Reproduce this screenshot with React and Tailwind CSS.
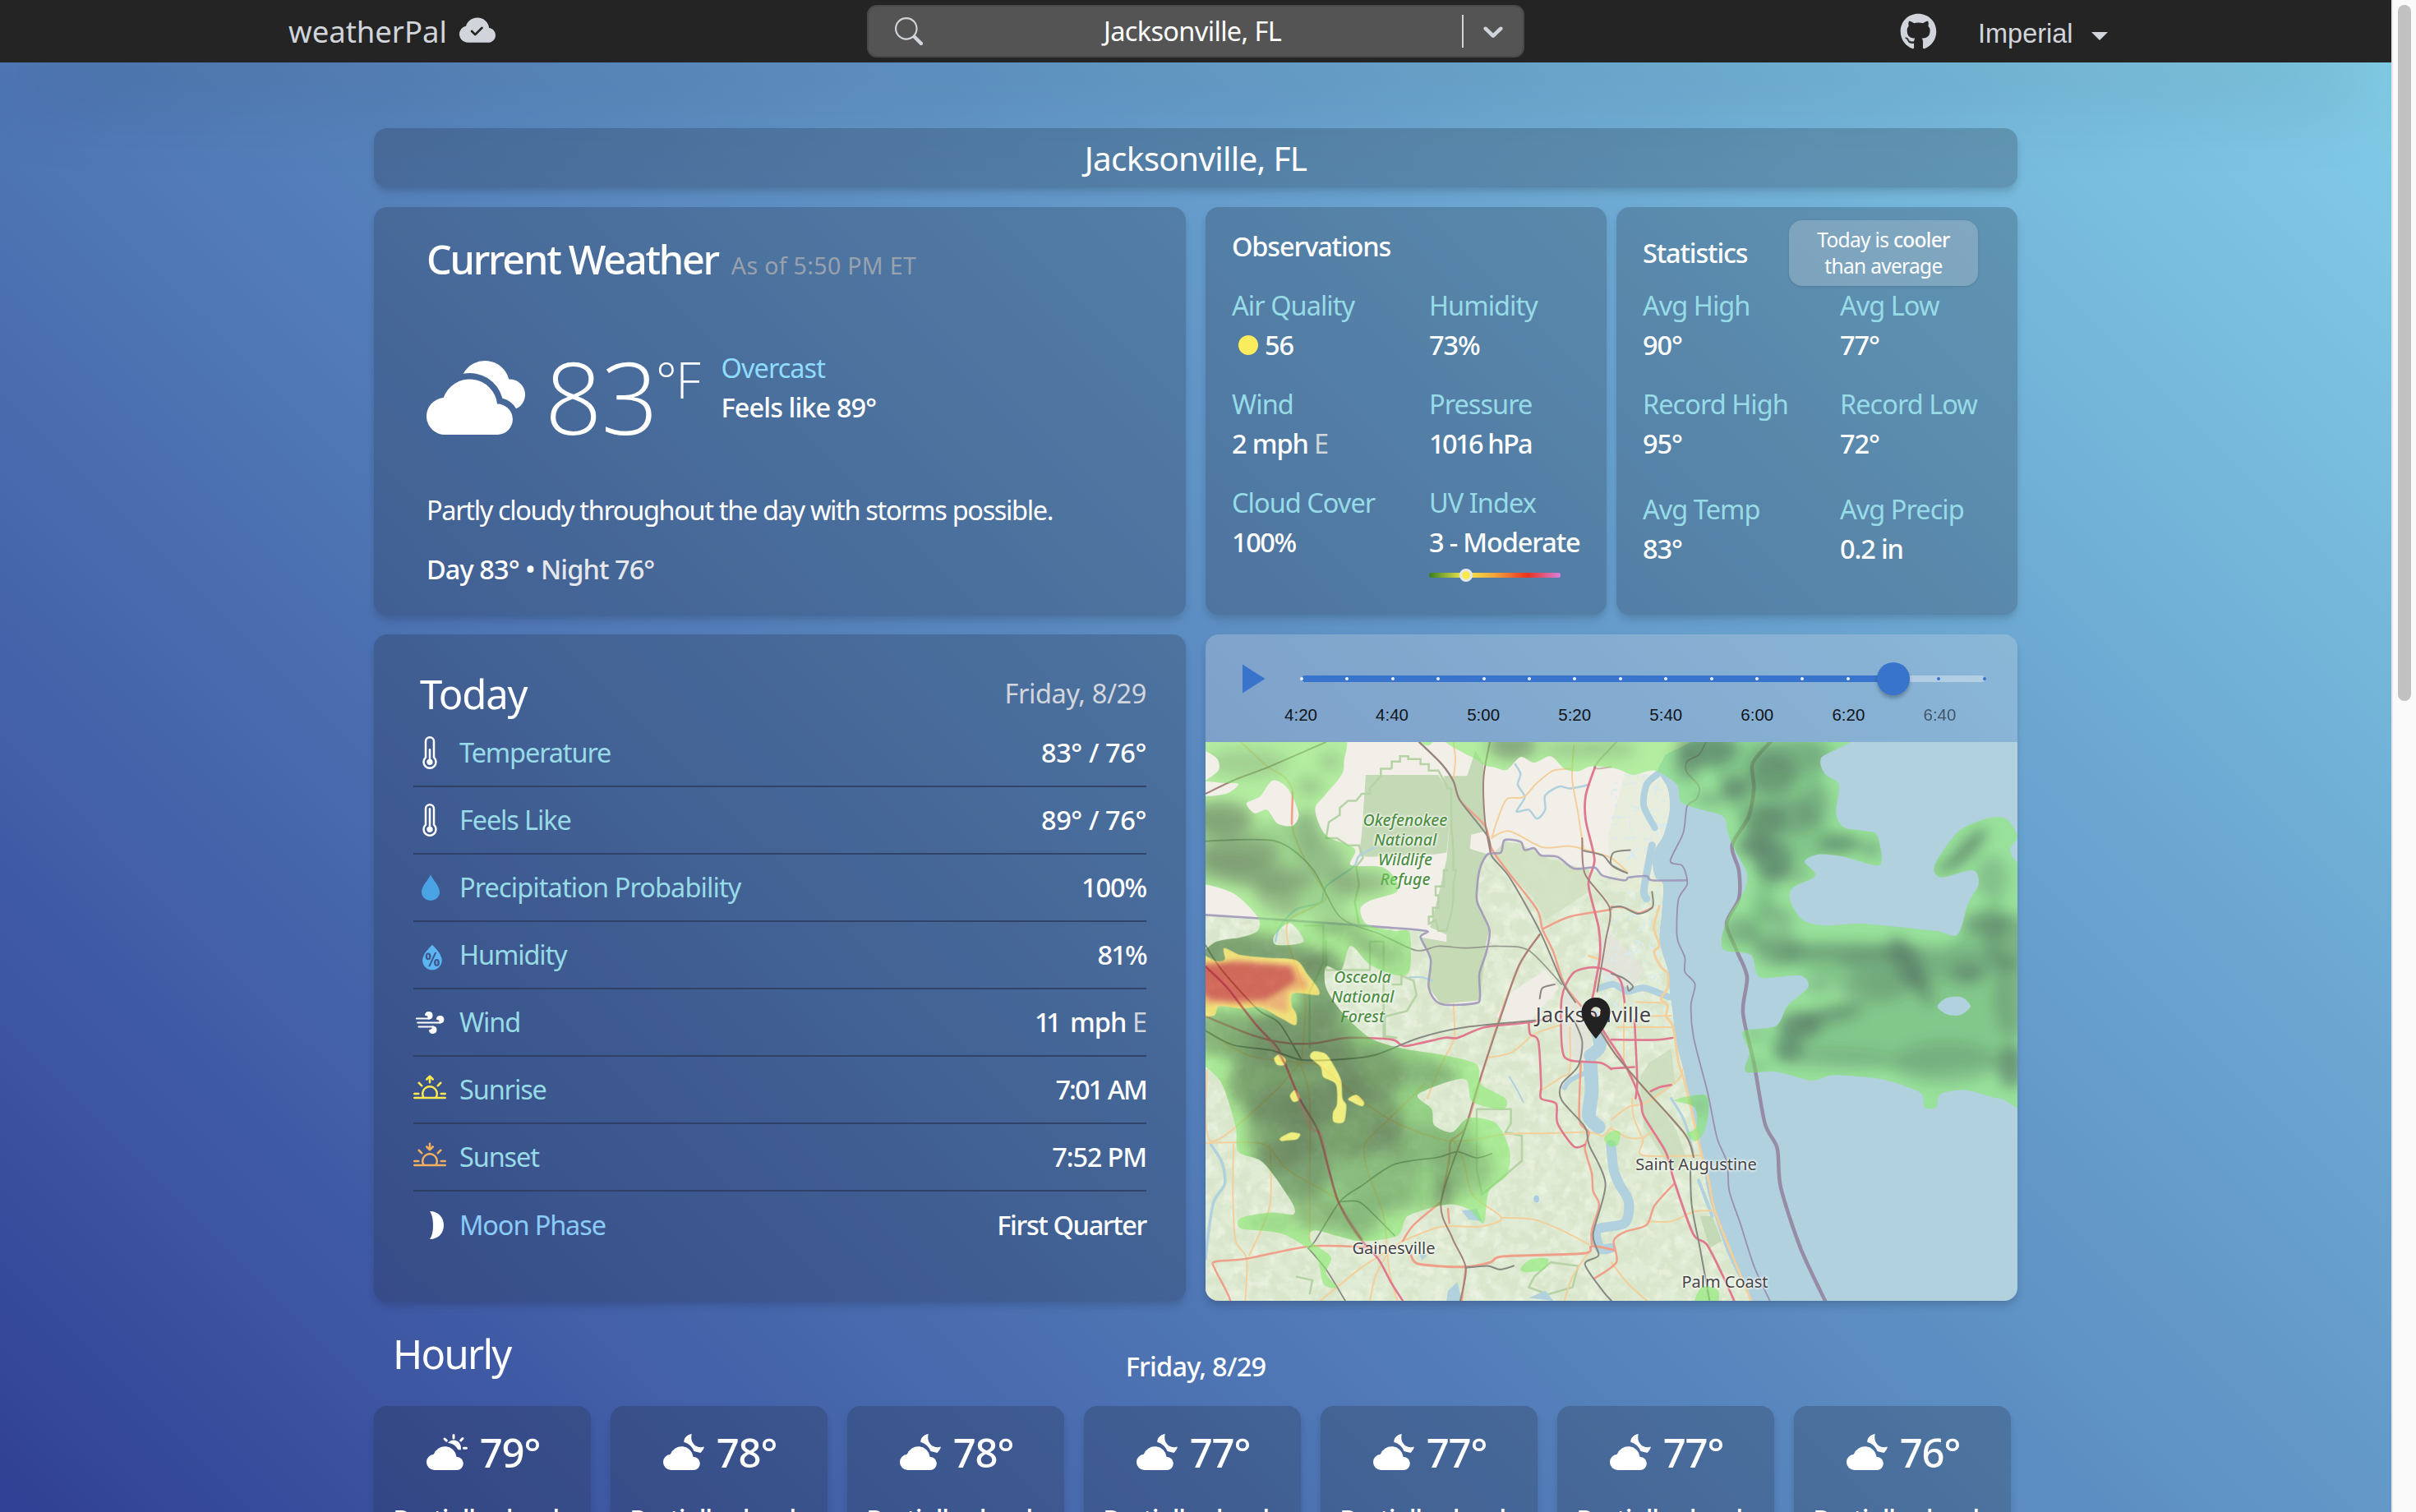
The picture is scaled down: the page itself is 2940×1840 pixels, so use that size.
import React from "react";
import {
  BsCloudCheckFill,
  BsSearch,
  BsCloudsFill,
  BsThermometerHalf,
  BsThermometerHigh,
  BsSunrise,
  BsSunset,
} from "react-icons/bs";
import { WiHumidity } from "react-icons/wi";
import { FaGithub } from "react-icons/fa";
import { MdArrowDropDown, MdPlayArrow, MdLocationOn } from "react-icons/md";

/* Catmull-Rom spline through a flat list of coordinates. */
function curve(flat, closed) {
  const p = [];
  for (let i = 0; i < flat.length; i += 2) p.push([flat[i], flat[i + 1]]);
  const n = p.length;
  const at = (i) => (closed ? p[(i + n) % n] : p[Math.max(0, Math.min(n - 1, i))]);
  let d = `M${p[0][0]},${p[0][1]}`;
  const last = closed ? n : n - 1;
  for (let i = 0; i < last; i++) {
    const [a, b, c, e] = [at(i - 1), at(i), at(i + 1), at(i + 2)];
    const k = 7;
    d += `C${b[0] + (c[0] - a[0]) / k},${b[1] + (c[1] - a[1]) / k} ${c[0] - (e[0] - b[0]) / k},${c[1] - (e[1] - b[1]) / k} ${c[0]},${c[1]}`;
  }
  return closed ? d + "Z" : d;
}

function Line({ pts, c, w = 2, o = 1, dash }) {
  return (
    <path d={curve(pts, false)} fill="none" stroke={c} strokeWidth={w} strokeOpacity={o} strokeDasharray={dash}
      strokeLinejoin="round" strokeLinecap="round" vectorEffect="non-scaling-stroke" />
  );
}

const LAND = curve([-40, -40, 1690, -40, 1675, 40, 1652, 80, 1687, 130, 1694, 190, 1672, 260, 1642, 300, 1632, 340, 1642, 380, 1670, 400, 1665, 480, 1657, 560, 1687, 640, 1694, 700, 1705, 760, 1717, 840, 1747, 930, 1767, 1020, 1792, 1100, 1817, 1190, 1832, 1260, 1862, 1340, 1902, 1430, 1952, 1510, 1992, 1568, 2000, 1620, -40, 1620], true);
const BORDER = [0, 485, 300, 500, 620, 518, 805, 530, 785, 548, 822, 610, 815, 690, 860, 735, 985, 733, 1002, 715, 1000, 650, 1025, 590, 1037, 530, 1010, 480, 990, 440, 1000, 360, 1030, 315, 1078, 310, 1092, 275, 1150, 280, 1165, 303, 1200, 298, 1225, 318, 1285, 322, 1345, 355, 1420, 352, 1450, 375, 1530, 388, 1545, 380, 1610, 376, 1630, 388, 1757, 388];
const FLORIDA = curve([...BORDER.slice(0, -2), 1680, 400, 2050, 1620, -40, 1620, -40, 485], true);

const GREEN = "#b6d3a6";
const ORANGE = "#f3cf9c";
const RED = "#f0a08a";
const PINK = "#e0788f";
const RAIL = "#8a8882";
const BROWN = "#a2837a";
const WATER = "#b0d1dd";

function BaseMap() {
  return (
    <svg className="absolute inset-0 h-full w-full" viewBox="0 0 2964 1568" preserveAspectRatio="none">
      <defs>
        <clipPath id="land"><path d={LAND} /></clipPath>
        <clipPath id="florida"><path d={FLORIDA} /></clipPath>
        <filter id="woods" x="0" y="0" width="100%" height="100%">
          <feTurbulence type="fractalNoise" baseFrequency="0.018 0.024" numOctaves="5" seed="7" />
          <feColorMatrix values="0 0 0 0 0.77  0 0 0 0 0.86  0 0 0 0 0.70  4 0 0 0 -1.6" />
        </filter>
        <filter id="fields" x="0" y="0" width="100%" height="100%">
          <feTurbulence type="fractalNoise" baseFrequency="0.024 0.03" numOctaves="5" seed="21" />
          <feColorMatrix values="0 0 0 0 0.92  0 0 0 0 0.94  0 0 0 0 0.84  0 4 0 0 -2.1" />
        </filter>
        <filter id="marsh" x="0" y="0" width="100%" height="100%">
          <feTurbulence type="turbulence" baseFrequency="0.02 0.026" numOctaves="2" seed="4" />
          <feColorMatrix values="0 0 0 0 0.68  0 0 0 0 0.83  0 0 0 0 0.87  -16 0 0 0 1.6" />
        </filter>
      </defs>
      <rect width="2964" height="1568" fill={WATER} />
      <path d={LAND} fill="#f2efe9" />
      <g clipPath="url(#land)">
        <path d={FLORIDA} fill="#d9e6cb" />
        <g clipPath="url(#florida)">
          <rect width="2100" height="1568" filter="url(#woods)" opacity=".75" />
          <rect width="2100" height="1568" filter="url(#fields)" opacity=".5" />
        </g>
        <path d="M585 92H850L890 140 895 200 880 310 840 315 600 322 560 320 570 260Z" fill="#c4d9b5" />
        <path d="M870 95H955L985 25 1015 60 1020 250 970 260 965 300 1030 315 1000 350 990 440 1035 530 1020 580 880 575 880 540 820 520 850 430 880 330 895 200Z" fill="#c4d9b5" />
        <path d="M785 548 822 610 815 690 860 735 1000 725 1025 580Z" fill="#c6dab6" />
        <path d="M1090 280 1150 285 1220 320 1400 360 1400 420 1240 500 1200 440 1040 320Z" fill="#cfe0bf" opacity=".8" />
        <path d="M1060 770 1120 700 1240 640 1290 690 1200 770 1160 800Z" fill="#f0ece6" />
        <path d="M1440 560 1480 540 1560 600 1600 640 1560 690 1440 650ZM1300 700 1360 700 1420 880 1360 900 1310 860Z" fill="#e4e2dc" opacity=".8" />
        <path d="M1530 90H1700V420H1480L1470 260Z" fill="#e6edd4" opacity=".7" />
        <g>
          <clipPath id="tidal"><path d="M1480 90H1700V760H1440L1400 640 1500 480 1480 300Z" /></clipPath>
          <g clipPath="url(#tidal)"><rect x="1380" width="340" height="800" filter="url(#marsh)" /></g>
        </g>
        <path d="M1585 940 1620 900 1700 860 1715 960 1640 1000 1720 1090 1760 1180 1700 1200 1600 1080Z" fill="#c7dbb8" opacity=".75" />
        <path d="M1805 1330 1850 1330 1885 1400 1840 1420Z" fill="#c4d9b5" />
      </g>
      <g fill="none" stroke={GREEN} strokeWidth="2.5" strokeLinejoin="miter">
        <path vectorEffect="non-scaling-stroke" d="M680 75V55H710V40H740V48H785V62H815V80H850L885 130H897V240L905 300V360H915L905 400V440L900 470 880 530H850L840 500 815 510V490H830V465H850V430H840V405H870V360H885" />
        <path vectorEffect="non-scaling-stroke" d="M680 75H640V95L600 130V145H570L550 165H520L490 185V205L450 225 440 270H480L520 290H560L575 325 550 350 560 400 545 450 560 510" />
        <path vectorEffect="non-scaling-stroke" d="M360 515H430V560H440V640H600V560H650V830H700L655 825V770L735 755 770 710 760 670 715 655V680H680" />
        <path vectorEffect="non-scaling-stroke" d="M990 1030H1115V1070L1095 1095 1155 1105V1175L1010 1270 990 1200ZM430 540V620L380 700V860" />
        <path vectorEffect="non-scaling-stroke" d="M1200 1500 1260 1460 1360 1470 1340 1530 1250 1550 1180 1530ZM330 1500 390 1510 380 1550" />
      </g>
      <g>
        <Line pts={[1130, 62, 1150, 90, 1140, 120, 1165, 155, 1135, 195, 1180, 190, 1210, 215, 1240, 190, 1240, 150, 1290, 125, 1330, 130, 1400, 120]} c={WATER} w={2.5} />
        <Line pts={[620, 295, 560, 320, 540, 350, 440, 405, 420, 450, 330, 470, 270, 520, 255, 560]} c={WATER} w={2.5} />
        <Line pts={[20, 1130, 60, 1180, 70, 1240, 30, 1290, 10, 1380, 0, 1450]} c={WATER} w={3.5} />
        <Line pts={[745, 660, 790, 660, 830, 670]} c={WATER} w={2} />
        <Line pts={[1110, 940, 1140, 980, 1160, 1010]} c={WATER} w={2} />
        <Line pts={[1415, 770, 1440, 850, 1405, 880]} c={WATER} w={16} />
        <Line pts={[1405, 905, 1410, 980, 1400, 1050, 1435, 1080]} c={WATER} w={17} />
        <Line pts={[1310, 970, 1330, 950, 1380, 930]} c={WATER} w={6} />
        <Line pts={[1480, 1130, 1490, 1200, 1510, 1240, 1545, 1290, 1530, 1350, 1430, 1368, 1440, 1420, 1480, 1420]} c={WATER} w={12} />
        <Line pts={[1440, 690, 1490, 680, 1540, 700, 1600, 690, 1690, 715]} c={WATER} w={8} />
        <Line pts={[1630, 290, 1615, 350, 1600, 420, 1610, 440]} c={WATER} w={9} />
        <Line pts={[1650, 90, 1610, 120, 1600, 180, 1640, 240]} c={WATER} w={8} />
        <Line pts={[1700, 1000, 1740, 1050, 1760, 1090, 1780, 1150]} c={WATER} w={3} />
        <Line pts={[1800, 1230, 1830, 1290, 1850, 1330]} c={WATER} w={4} />
        <path d="M935 1315 990 1310 1010 1345 960 1340ZM885 1540 920 1515 935 1568H880ZM1180 1560 1240 1540 1270 1568ZM780 1435 810 1440 790 1455Z" fill={WATER} />
        <circle cx="1208" cy="1282" r="10" fill="#a9cde4" />
      </g>
      <g>
        <Line pts={[130, 0, 220, 65, 290, 100, 318, 140, 315, 230, 350, 310, 438, 430, 400, 460, 305, 500, 300, 560, 345, 660, 365, 740, 350, 900]} c={ORANGE} />
        <Line pts={[905, 0, 912, 50, 905, 100]} c={ORANGE} />
        <Line pts={[1045, 270, 1065, 220, 1100, 160, 1160, 155, 1210, 115, 1270, 80, 1335, 75]} c={ORANGE} />
        <Line pts={[1045, 268, 1110, 250, 1230, 295, 1330, 292, 1400, 305, 1480, 325, 1540, 365]} c={ORANGE} />
        <Line pts={[1345, 10, 1338, 100, 1360, 200, 1380, 300]} c={ORANGE} />
        <Line pts={[905, 735, 908, 830, 870, 890, 835, 950, 810, 1000]} c={ORANGE} />
        <Line pts={[1035, 885, 1120, 870, 1200, 820, 1290, 795]} c={ORANGE} />
        <Line pts={[0, 810, 160, 880, 350, 900, 420, 910, 560, 1000, 700, 1070, 900, 1120, 1100, 1100, 1230, 1098, 1400, 1095, 1450, 1105, 1482, 1080]} c={ORANGE} />
        <Line pts={[5, 920, 20, 1120, 240, 990, 345, 900]} c={ORANGE} />
        <Line pts={[0, 1125, 210, 1128, 300, 1200, 480, 1280]} c={ORANGE} />
        <Line pts={[345, 900, 380, 1000, 380, 1250, 380, 1400]} c={ORANGE} />
        <Line pts={[102, 1128, 100, 1280, 110, 1400, 150, 1450, 145, 1568]} c={ORANGE} />
        <Line pts={[235, 1128, 235, 1300, 160, 1440]} c={ORANGE} />
        <Line pts={[800, 960, 640, 1080, 580, 1130, 590, 1200, 650, 1330, 670, 1480, 700, 1568]} c={ORANGE} />
        <Line pts={[900, 1110, 940, 1170, 975, 1270, 1080, 1335, 1000, 1360, 860, 1360, 720, 1400]} c={ORANGE} />
        <Line pts={[1080, 1335, 1200, 1340, 1300, 1370, 1400, 1410]} c={ORANGE} />
        <Line pts={[420, 1568, 560, 1480, 640, 1440, 720, 1400]} c={ORANGE} />
        <Line pts={[600, 1568, 620, 1500, 660, 1440]} c={ORANGE} />
        <Line pts={[1220, 980, 1300, 940, 1330, 920, 1330, 800]} c={ORANGE} />
        <Line pts={[1310, 1568, 1340, 1500, 1400, 1430]} c={ORANGE} />
        <Line pts={[1400, 600, 1440, 610]} c={ORANGE} w={3} />
        <g transform="translate(1482 0)">
          <Line pts={[175, 460, 155, 520, 175, 570, 155, 590, 180, 630, 205, 650, 205, 690, 180, 720, 205, 740, 200, 770, 225, 800, 245, 900, 270, 960, 300, 1060, 330, 1160, 355, 1230, 375, 1310, 430, 1420, 510, 1568]} c={ORANGE} w={3} />
          <Line pts={[90, 730, 200, 732]} c={ORANGE} />
          <Line pts={[20, 800, 225, 800]} c={ORANGE} />
          <Line pts={[100, 770, 218, 768]} c={ORANGE} />
          <Line pts={[45, 730, 45, 900]} c={ORANGE} />
          <Line pts={[0, 1060, 60, 1025, 130, 1010, 240, 950, 260, 920]} c={ORANGE} />
          <Line pts={[75, 1000, 80, 1050, 100, 1090, 115, 1120, 115, 1160, 330, 1160]} c={ORANGE} />
          <Line pts={[0, 1085, 60, 1110, 115, 1110, 150, 1090]} c={ORANGE} />
          <Line pts={[130, 1345, 220, 1345, 300, 1318, 370, 1315]} c={ORANGE} />
          <Line pts={[0, 1460, 60, 1520, 130, 1568]} c={ORANGE} />
        </g>
      </g>
      <g>
        <Line pts={[780, 0, 860, 60, 905, 110, 930, 165, 1020, 235, 1045, 300, 1110, 370, 1210, 470, 1230, 525, 1270, 590, 1310, 680, 1370, 740]} c={RED} w={2.5} />
        <Line pts={[1230, 525, 1330, 490, 1482, 470]} c={RED} w={2.5} />
        <Line pts={[1482, 462, 1530, 465, 1580, 480, 1630, 465]} c={RED} w={2.5} />
        <Line pts={[0, 145, 110, 105, 230, 70, 440, 0]} c={BROWN} w={2} />
        <Line pts={[318, 140, 315, 230]} c={RED} w={2.5} />
        <Line pts={[1220, 540, 1150, 620, 1080, 760, 1010, 930, 950, 1080, 895, 1120, 890, 1170, 860, 1290]} c={RED} w={2.5} />
        <Line pts={[1370, 900, 1365, 1060, 1400, 1095, 1385, 1140, 1410, 1210, 1415, 1260, 1437, 1300, 1410, 1370, 1410, 1410]} c={RED} w={2.5} />
        <Line pts={[30, 1568, 90, 1568, 35, 1480, 35, 1458, 150, 1450, 380, 1415, 600, 1418, 640, 1420]} c={RED} w={2.5} />
        <Line pts={[860, 1290, 760, 1355, 720, 1400]} c={RED} w={2.5} />
        <Line pts={[885, 1310, 890, 1350]} c={RED} w={2.5} />
        <Line pts={[750, 1440, 780, 1465, 950, 1473, 1040, 1460, 1090, 1443, 1380, 1435, 1410, 1415, 1490, 1425]} c={RED} w={3} />
        <Line pts={[1710, 1240, 1640, 1300, 1610, 1355, 1530, 1375, 1490, 1400, 1500, 1460, 1420, 1505]} c={RED} w={2.5} />
        <Line pts={[950, 1475, 935, 1568]} c={RED} w={2.5} />
      </g>
      <g>
        <Line pts={[0, 630, 80, 690, 180, 790, 265, 860, 310, 940, 350, 1010, 410, 1090, 450, 1200, 490, 1300, 560, 1390, 630, 1450, 680, 1520, 720, 1568]} c={PINK} w={2.6} />
        <Line pts={[0, 770, 180, 825, 300, 845, 400, 845, 520, 830, 680, 835, 730, 853, 870, 830, 920, 830, 1020, 800, 1180, 787, 1250, 775]} c={PINK} w={2.6} />
        <Line pts={[1180, 787, 1185, 820, 1215, 840, 1225, 960, 1225, 1000, 1280, 1015, 1285, 1070, 1345, 1135, 1385, 1130]} c={PINK} w={2.6} />
        <Line pts={[1482, 918, 1440, 900, 1330, 893, 1302, 860, 1300, 720, 1340, 650, 1400, 633, 1450, 636, 1500, 655, 1520, 680, 1530, 730]} c={PINK} w={2.6} />
        <Line pts={[1422, 70, 1388, 150, 1388, 220, 1420, 330, 1398, 400, 1435, 520, 1440, 600, 1420, 690, 1410, 750, 1460, 820, 1520, 890, 1560, 950, 1590, 1010, 1600, 1050, 1680, 1150, 1710, 1230, 1780, 1380, 1830, 1410, 1890, 1500, 1930, 1568]} c={PINK} w={2.8} />
        <Line pts={[1566, 780, 1576, 950, 1570, 1000]} c={PINK} w={2.6} />
        <Line pts={[1482, 835, 1640, 836, 1705, 830]} c={PINK} w={2.6} />
        <Line pts={[1482, 916, 1565, 912]} c={PINK} w={2.6} />
        <Line pts={[1625, 980, 1660, 968, 1700, 962]} c={PINK} w={2.6} />
      </g>
      <g>
        <Line pts={[0, 278, 255, 278, 390, 355, 490, 490, 640, 540, 770, 585, 850, 573, 950, 578, 1070, 573, 1180, 585, 1300, 680]} c={RAIL} o={0.8} w={1.7} />
        <Line pts={[780, 0, 860, 60, 905, 110, 930, 165, 1030, 265, 1045, 320, 1110, 380, 1220, 530, 1300, 670, 1350, 730]} c={RAIL} w={2} />
        <Line pts={[1038, 0, 1015, 100, 1020, 220, 1040, 310]} c={BROWN} w={2} />
        <Line pts={[1220, 540, 1145, 625, 1085, 755, 1000, 950, 950, 1080, 860, 1290, 900, 1390, 950, 1475, 930, 1568]} c={BROWN} w={2} />
        <Line pts={[0, 810, 100, 850, 240, 865, 350, 892, 500, 890, 620, 878, 780, 830, 950, 800, 1220, 780]} c={RAIL} w={2} />
        <Line pts={[0, 570, 60, 640, 190, 750, 270, 790, 350, 892]} c={RAIL} w={2} />
        <Line pts={[1045, 1155, 990, 1167, 920, 1150, 850, 1165, 690, 1185, 570, 1245, 490, 1290, 400, 1400, 375, 1420]} c={RAIL} w={1.7} />
        <Line pts={[375, 1420, 440, 1480, 510, 1568]} c={RAIL} w={1.7} />
        <Line pts={[490, 1290, 560, 1290, 620, 1330, 690, 1385]} c={RAIL} w={1.7} />
        <Line pts={[950, 1475, 1030, 1470, 1075, 1480, 1125, 1470]} c={RAIL} w={2.2} />
        <Line pts={[1275, 680, 1230, 690, 1220, 720]} c={RAIL} w={2} />
        <Line pts={[1345, 780, 1375, 840, 1360, 910, 1300, 960, 1300, 1005, 1385, 1080, 1400, 1130, 1460, 1240, 1415, 1380, 1435, 1440, 1385, 1465, 1450, 1540, 1482, 1568]} c={RAIL} w={2} />
        <Line pts={[1375, 270, 1385, 370, 1475, 465, 1460, 560, 1430, 700]} c={BROWN} w={2} />
        <Line pts={[1480, 70, 1420, 70, 1500, 0]} c={BROWN} w={2} o={0.5} />
        <Line pts={[1440, 810, 1500, 880, 1600, 970, 1750, 1100, 1782, 1165]} c="#9a8270" w={2.2} />
        <Line pts={[1770, 1200, 1775, 1300, 1805, 1420, 1840, 1568]} c={RAIL} w={2} />
        <Line pts={[1380, 305, 1450, 318, 1482, 345, 1540, 368, 1482, 345, 1490, 310, 1550, 303]} c={RAIL} w={2} />
        <Line pts={[1482, 465, 1520, 462, 1580, 482, 1632, 463, 1630, 420]} c={RAIL} w={2} />
        <Line pts={[1482, 650, 1525, 662, 1560, 685, 1545, 698, 1540, 685]} c={RAIL} w={2} />
      </g>
      <Line pts={BORDER} c="#9c93b8" w={2.6} o={0.85} />
      <g transform="translate(1482 0)">
        <Line pts={[345, 0, 320, 35, 275, 55, 275, 85, 320, 125, 310, 160, 276, 180, 262, 255, 215, 333, 255, 345, 270, 365, 276, 400, 245, 440, 238, 520, 243, 560, 268, 605, 268, 645, 305, 680, 290, 740, 300, 830, 350, 980, 385, 1110, 422, 1180, 430, 1260, 470, 1350, 520, 1470, 578, 1568]} c="#9b8fae" w={1.8} />
        <Line pts={[580, 0, 515, 60, 520, 130, 500, 210, 440, 290, 465, 360, 465, 440, 420, 510, 460, 590, 495, 660, 480, 760, 520, 900, 560, 1070, 605, 1140, 618, 1250, 690, 1420, 780, 1568]} c="#968ca6" w={4.5} />
      </g>
    </svg>
  );
}

const RAIN_WEST =
  curve([-60, -40, 470, -40, 505, 60, 490, 100, 435, 150, 400, 190, 440, 262, 545, 300, 530, 345, 640, 350, 690, 380, 698, 420, 600, 445, 565, 470, 590, 512, 690, 530, 745, 535, 745, 640, 700, 655, 600, 625, 530, 572, 495, 640, 440, 630, 440, 690, 500, 760, 600, 830, 720, 860, 880, 880, 990, 905, 1005, 960, 1095, 1000, 1085, 1030, 975, 1010, 955, 950, 900, 950, 775, 990, 825, 1030, 835, 1075, 900, 1095, 960, 1055, 1060, 1070, 1110, 1145, 1100, 1215, 1035, 1260, 1015, 1350, 960, 1310, 880, 1298, 740, 1330, 700, 1385, 560, 1400, 400, 1370, 385, 1400, 458, 1445, 440, 1490, 480, 1530, 430, 1520, 400, 1440, 280, 1380, 130, 1365, 130, 1335, 240, 1320, 322, 1325, 310, 1285, 210, 1180, 120, 1150, 110, 1080, 60, 960, -10, 905, -60, 880], true) +
  curve([-60, 410, 90, 420, 190, 490, 190, 530, 130, 548, 40, 560, -60, 600], true) +
  curve([-20, 25, 40, 45, 50, 75, 20, 98, -20, 106], true) +
  curve([150, 172, 200, 152, 245, 108, 300, 130, 340, 200, 318, 235, 262, 228, 225, 190, 180, 200], true) +
  curve([-20, 112, 60, 115, 120, 118, 75, 145, -20, 150], true) +
  curve([250, 545, 308, 508, 358, 560, 262, 570], true);

const RAIN_EAST =
  curve([930, -40, 1000, 55, 1060, 72, 1100, 78, 1150, 42, 1200, 58, 1260, 40, 1310, 75, 1360, 82, 1410, 68, 1500, 75, 1560, 92, 1640, 80, 1722, 120, 1742, 172, 1885, 207, 1905, 250, 1925, 292, 1977, 370, 1962, 425, 1902, 500, 1887, 580, 1990, 597, 2025, 660, 2170, 655, 2200, 688, 2125, 740, 2082, 797, 1963, 812, 1985, 870, 1972, 925, 2082, 925, 2215, 950, 2290, 935, 2460, 945, 2570, 970, 2617, 990, 2625, 1025, 2667, 1025, 2685, 987, 2780, 977, 2900, 1000, 3020, 985, 3020, 350, 2960, 335, 2937, 300, 2964, 265, 2925, 217, 2862, 213, 2750, 250, 2662, 345, 2685, 380, 2802, 360, 2822, 400, 2785, 450, 2745, 540, 2662, 530, 2402, 510, 2262, 515, 2182, 500, 2137, 450, 2142, 410, 2227, 375, 2187, 335, 2242, 315, 2332, 322, 2462, 345, 2452, 262, 2412, 250, 2332, 240, 2302, 200, 2312, 120, 2262, 90, 2247, 45, 2320, -40], true) +
  curve([2672, 742, 2705, 718, 2760, 716, 2793, 742, 2755, 766, 2705, 764], true);

const RAIN_SMALL =
  curve([1712, 1005, 1822, 990, 1837, 1030, 1822, 1090, 1790, 1120, 1757, 1100, 1792, 1080, 1785, 1025], true) +
  curve([1455, 1112, 1482, 1092, 1514, 1095, 1505, 1130, 1475, 1135], true) +
  curve([1780, 1590, 1812, 1530, 1872, 1540, 1860, 1590], true) +
  curve([1150, 1478, 1185, 1452, 1250, 1450, 1235, 1480, 1170, 1488], true) +
  curve([770, -20, 840, -20, 820, 8, 795, 6], true);

/* cx, cy, rx, ry, rotation, opacity */
const CELLS = [
  [150, 60, 150, 40, 0, 0.35], [455, 55, 40, 22, 0, 0.45], [380, 125, 50, 25, 0, 0.45],
  [60, 215, 110, 50, 0, 0.8], [120, 310, 150, 45, 0, 0.7], [180, 370, 210, 40, 8, 0.7], [260, 440, 90, 40, 20, 0.6],
  [370, 250, 50, 60, 0, 0.45], [430, 330, 90, 60, 0, 0.35], [560, 395, 110, 35, 0, 0.6], [480, 520, 90, 20, 0, 0.65],
  [590, 570, 70, 25, 20, 0.6], [680, 600, 60, 40, 0, 0.3],
  [120, 590, 330, 60, 6, 0.95], [430, 690, 90, 110, 0, 0.85], [200, 830, 330, 70, 4, 0.7], [350, 830, 200, 90, 0, 0.6],
  [330, 960, 250, 120, 0, 0.8], [590, 930, 140, 80, 0, 0.8], [500, 1060, 220, 110, 0, 0.8], [280, 1080, 130, 120, 0, 0.8],
  [310, 1200, 150, 90, 0, 0.85], [660, 1100, 70, 50, 0, 0.6], [400, 1320, 90, 50, 0, 0.55], [540, 1350, 110, 35, 0, 0.45],
  [820, 930, 110, 40, 0, 0.45], [800, 1130, 150, 60, 0, 0.4], [870, 1270, 35, 45, 0, 0.9], [940, 1200, 110, 70, 0, 0.45],
  [620, 1220, 160, 90, 0, 0.35], [240, 1350, 80, 14, 0, 0.4], [700, 1300, 200, 20, 0, 0.25],
  [1120, 10, 90, 40, 0, 0.85], [1330, 20, 100, 25, 0, 0.4], [1480, 20, 90, 25, 0, 0.4],
  [1830, 20, 110, 50, 0, 0.85], [1760, 60, 50, 50, 0, 0.7], [1935, 130, 50, 32, 0, 0.9], [1845, 160, 60, 20, 0, 0.5],
  [2070, 90, 90, 60, 0, 0.75], [2040, 220, 70, 50, 0, 0.8], [2000, 290, 60, 35, 0, 0.9], [2070, 330, 70, 60, 0, 0.85],
  [2140, 210, 90, 50, 0, 0.55], [2230, 180, 60, 60, 0, 0.4], [2150, 40, 150, 50, 0, 0.4], [2310, 285, 80, 22, 0, 0.8],
  [2430, 300, 40, 25, 0, 0.55], [2130, 370, 80, 22, 0, 0.5], [2090, 490, 60, 30, 20, 0.5], [1950, 530, 60, 40, 0, 0.55],
  [2090, 580, 90, 50, 0, 0.55], [2350, 590, 260, 28, 0, 0.6], [2560, 620, 90, 45, 50, 0.85], [2610, 680, 70, 30, 50, 0.7],
  [2782, 650, 60, 30, 0, 0.75], [2640, 620, 330, 50, 0, 0.4], [2440, 690, 130, 40, 0, 0.5], [2170, 795, 80, 38, 0, 0.95],
  [2130, 860, 50, 35, 0, 0.85], [2280, 765, 120, 25, -8, 0.7], [2240, 680, 60, 30, 0, 0.35], [2780, 300, 90, 22, -38, 1],
  [2700, 350, 40, 16, -20, 0.7], [2870, 380, 60, 60, 0, 0.4], [2850, 510, 90, 35, 0, 0.65], [2930, 560, 90, 80, 0, 0.6],
  [2950, 720, 70, 110, 0, 0.55], [2940, 910, 50, 60, 0, 0.9], [2700, 900, 190, 60, 0, 0.4], [2300, 890, 220, 30, 0, 0.3],
  [2010, 820, 40, 20, 0, 0.35], [2000, 910, 60, 15, 0, 0.35], [1805, 1020, 30, 30, 0, 0.35],
];

const STORM = curve([-40, 600, 40, 615, 70, 610, 68, 578, 130, 598, 220, 605, 330, 612, 375, 655, 410, 690, 412, 710, 350, 705, 315, 708, 315, 740, 332, 765, 328, 795, 275, 775, 200, 745, 130, 748, 50, 742, 30, 768, -40, 755], true);

function Radar() {
  return (
    <svg className="absolute inset-0 h-full w-full opacity-60" viewBox="0 0 2964 1568" preserveAspectRatio="none">
      <defs>
        <clipPath id="rain"><path clipRule="evenodd" d={RAIN_WEST} /><path clipRule="evenodd" d={RAIN_EAST} /><path d={RAIN_SMALL} /></clipPath>
        <clipPath id="storm"><path d={STORM} /></clipPath>
        <filter id="soft" x="-60%" y="-60%" width="220%" height="220%"><feGaussianBlur stdDeviation="24 18" /></filter>
        <filter id="softer" x="-20%" y="-20%" width="140%" height="140%"><feGaussianBlur stdDeviation="9 7" /></filter>
      </defs>
      <g clipPath="url(#rain)">
        <rect width="2964" height="1568" fill="#89eb70" />
        <g fill="#4fa545" fillOpacity=".6">
          <path d="M560 1400 300 1200 150 1000 60 820 500 700 900 930 1000 1150 900 1260 620 1340" filter="url(#soft)" />
          <path d="M-60 170 200 230 380 200 460 300 560 400 480 500 380 480 200 400 -60 390Z" filter="url(#soft)" />
          <path d="M1800 0H2260L2250 230 2420 290 2100 360 2040 560 2700 590 2900 420 2964 900 2640 930 2060 880 2080 820 2420 700 2100 620 1960 560 2030 350Z" filter="url(#soft)" />
        </g>
        <g fill="#214419" filter="url(#soft)">
          {CELLS.map(([cx, cy, rx, ry, rot, o], i) => (
            <ellipse key={i} cx={cx} cy={cy} rx={rx} ry={ry} fillOpacity={o * 0.76} transform={`rotate(${rot} ${cx} ${cy})`} />
          ))}
        </g>
      </g>
      <path d={STORM} fill="#fbdc40" />
      <g clipPath="url(#storm)">
        <path d="M-40 618 60 622 110 610 320 624 370 668 375 690 300 700 300 760 180 735 -40 735Z" fill="#f5903a" filter="url(#softer)" />
        <path d="M-40 628 110 618 310 630 330 668 270 700 220 722 100 728 20 722 -40 690Z" fill="#c8150f" filter="url(#softer)" />
      </g>
      <g fill="#fbf04a">
        <path d={curve([382, 885, 395, 868, 440, 876, 470, 910, 495, 950, 500, 1000, 514, 1020, 505, 1066, 468, 1066, 465, 1040, 480, 1015, 475, 960, 430, 940, 420, 912], true)} />
        <path d={curve([250, 888, 270, 876, 292, 890, 288, 906, 262, 906], true)} />
        <path d={curve([308, 992, 328, 976, 345, 1000, 322, 1010], true)} />
        <path d={curve([520, 1002, 550, 990, 578, 1010, 572, 1022, 540, 1012], true)} />
        <path d={curve([272, 1112, 310, 1096, 345, 1100, 335, 1114, 300, 1118, 278, 1120], true)} />
      </g>
      <Line pts={[0, 630, 80, 690, 140, 750, 220, 825, 290, 905, 380, 1075, 420, 1100, 450, 1200, 485, 1290, 570, 1395]} c="#7a1f26" w={2.5} o={0.6} />
    </svg>
  );
}

const HALO = "[text-shadow:0_0_3px_#fff,0_0_3px_#fff,0_0_4px_#fff]";

function MapLabels() {
  return (
    <div className={"absolute inset-0 whitespace-nowrap text-center leading-6 tracking-normal text-[#444] " + HALO}>
      <div className="absolute left-[183px] top-[83px] w-[120px] text-[19.5px] font-medium italic leading-[24px] text-[#4f8f43]">
        Okefenokee<br />National<br />Wildlife<br />Refuge
      </div>
      <div className="absolute left-[131px] top-[274px] w-[120px] text-[19.5px] font-medium italic leading-[24px] text-[#4f8f43]">
        Osceola<br />National<br />Forest
      </div>
      <div className="absolute left-[391px] top-[319px] w-[162px] text-[25.5px] tracking-[0.01em]">Jacksonville</div>
      <div className="absolute left-[507px] top-[502px] w-[180px] text-[20px]">Saint Augustine</div>
      <div className="absolute left-[562px] top-[645px] w-[140px] text-[20px]">Palm Coast</div>
      <div className="absolute left-[159px] top-[604px] w-[140px] text-[20px]">Gainesville</div>
    </div>
  );
}

const TICKS = ["4:20", "", "4:40", "", "5:00", "", "5:20", "", "5:40", "", "6:00", "", "6:20", "", "6:40", ""];

function MapCard() {
  return (
    <section className="flex h-[811px] flex-col overflow-hidden rounded-2xl shadow-[0_8px_12px_-2px_rgba(0,0,0,.1),0_4px_8px_-2px_rgba(0,0,0,.1)]">
      <div className="flex h-[131px] bg-[#d2d6e2]/30">
        <MdPlayArrow className="ml-[25px] mt-[24px] size-[60px] shrink-0 text-[#3874cb]" />
        <div className="ml-8 mt-[50px] w-[831px] shrink-0">
          <div className="relative h-2 rounded-full bg-white/35">
            <div className="h-2 w-[720px] rounded-full bg-[#3874cb]" />
            <div className="absolute -left-[2px] -right-[2px] top-[2px] flex justify-between">
              {TICKS.map((t, i) => (
                <span key={i} className={i > 13 ? "size-1 rounded-full bg-[#3874cb]" : "size-1 rounded-full bg-white/90"} />
              ))}
            </div>
            <div className="absolute left-[700px] top-[-16px] size-10 rounded-full bg-[#3874cb] shadow-[0_4px_4px_rgba(0,0,0,.25)]" />
          </div>
          <div className="-ml-[29px] -mr-[28px] mt-[25px] flex justify-between font-['Liberation_Sans',sans-serif] text-[20.5px] leading-[30px] tracking-normal text-[#10151a]">
            {TICKS.map((t, i) => (
              <span key={i} className={i === 14 ? "-mr-px w-14 text-center opacity-60" : "-mr-px w-14 text-center"}>{t}</span>
            ))}
          </div>
        </div>
      </div>
      <div className="relative h-[680px] overflow-hidden">
        <BaseMap />
        <MapLabels />
        <Radar />
        <MdLocationOn className="absolute left-[445px] top-[306px] size-[60px] text-[#222]" />
      </div>
    </section>
  );
}

const CARD = "rounded-2xl bg-gray-800/25 shadow-[0_8px_12px_-2px_rgba(0,0,0,.1),0_4px_8px_-2px_rgba(0,0,0,.1)] ";

function CloudSun() {
  return (
    <svg className="ml-[2px] mr-[16px] h-11 w-[50px] shrink-0" viewBox="0 0 50 44" fill="currentColor">
      <path transform="translate(0 -7.2) scale(3.2)" d="M11.473 11a4.5 4.5 0 0 0-8.72-.99A3 3 0 0 0 3 16h8.5a2.5 2.5 0 0 0 0-5z" />
      <path d="M26 11C28 8.300 30.500 7.400 33 7.400C39 7.400 43.200 13 41.700 19.600L38.200 19C36 14.500 32 11.500 26 11Z" />
      <path d="M33 1.500V5M22 6L24.300 8.200M44 5.500L41.700 8M45.500 17.300H48.500" fill="none" stroke="currentColor" strokeWidth="3" strokeLinecap="round" />
    </svg>
  );
}

function CloudMoon() {
  return (
    <svg className="ml-[2px] mr-[16px] h-11 w-[50px] shrink-0" viewBox="0 0 50 44" fill="currentColor">
      <path transform="translate(0 -7.2) scale(3.2)" d="M11.473 11a4.5 4.5 0 0 0-8.72-.99A3 3 0 0 0 3 16h8.5a2.5 2.5 0 0 0 0-5z" />
      <path d="M34.800 0C28.500 1 25 5.500 25.300 10C31 11.500 35.500 15.500 37.500 21L45.500 23C47.800 21 49.300 18.500 50 15.600C45.500 17 40.500 16.300 37.300 12.500C34.300 9 33.500 4.500 34.800 0Z" />
    </svg>
  );
}

function WindIcon() {
  return (
    <svg className="h-[29px] w-[36px] shrink-0" viewBox="30 568 108 88" fill="currentColor" stroke="currentColor" strokeWidth="6" strokeLinecap="round">
      <path d="M35 597H82" /><path d="M80 597A11.500 11.500 0 1 0 69 583L78 586Z" />
      <path d="M39 612H122" /><path d="M122 612A11.500 11.500 0 1 0 111 598L121 602Z" />
      <path d="M43 627H96" /><path d="M96 627A11.500 11.500 0 1 1 84 641L94 637Z" />
    </svg>
  );
}

function Stat({ label, children }) {
  return (
    <div className="leading-[48px]">
      <div className="tracking-[-0.03em] text-[#97dbe7]">{label}</div>
      <div className="flex items-center font-medium">{children}</div>
    </div>
  );
}

function Row({ icon, label, value, last, blue }) {
  return (
    <li className={last ? "flex h-[82px] items-center" : "flex h-[82px] items-center border-b-2 border-[#2c3b5c]/80"}>
      <span className="flex w-10 shrink-0 items-center justify-center">{icon}</span>
      <span className={blue ? "ml-4 text-[#8bcbf7]" : "ml-4 text-[#97dbe7]"}>{label}</span>
      <span className="ml-auto font-medium">{value}</span>
    </li>
  );
}

const HOURS = [79, 78, 78, 77, 77, 77, 76];

export default function App() {
  return (
    <div className="flex h-[1840px] w-[2940px] overflow-hidden font-['Noto_Sans','Open_Sans',sans-serif] text-[32.5px] tracking-[-0.035em] text-white">
      <div className="flex h-full w-[2910px] flex-col bg-[linear-gradient(45deg,#304094_0%,#3c54a1_12%,#527cb8_40%,#6ba6d1_72%,#83cfe9_100%)]">
        <header className="flex h-[76px] shrink-0 items-center bg-[#242424] text-[#d1d5db] shadow-[0_50px_100px_-24px_rgba(0,0,0,.25)]">
          <div className="ml-[351px] flex w-[704px] items-center text-[36.5px] leading-[76px]">
            <span className="w-[192px] tracking-[-0.001em]">weatherPal</span>
            <BsCloudCheckFill className="ml-4 size-11" />
          </div>
          <div className="flex h-16 w-[800px] items-center rounded-xl border-2 border-[#494949] bg-[#545454]">
            <BsSearch className="ml-8 size-[34px]" />
            <span className="flex-1 text-center tracking-[-0.02em] text-white">Jacksonville, FL</span>
            <span className="h-10 w-[2px] bg-[#d1d5db]" />
            <svg className="ml-4 mr-[16px] size-10 fill-current" viewBox="0 0 20 20">
              <path d="M4.516 7.548c0.436-0.446 1.043-0.481 1.576 0l3.908 3.747 3.908-3.747c0.533-0.481 1.141-0.446 1.574 0 0.436 0.445 0.408 1.197 0 1.615-0.406 0.418-4.695 4.502-4.695 4.502-0.217 0.223-0.502 0.335-0.787 0.335s-0.57-0.112-0.789-0.335c0 0-4.287-4.084-4.695-4.502s-0.436-1.17 0-1.615z" />
            </svg>
          </div>
          <FaGithub className="ml-[457px] size-[45px]" />
          <span className="ml-[50px] mt-[6px] font-['Liberation_Sans',sans-serif] text-[32.500px] tracking-normal">Imperial</span>
          <MdArrowDropDown className="ml-2 mt-[9px] size-12" />
        </header>

        <main className="ml-[455px] mt-20 flex w-[2000px] flex-col">
          <h1 className={CARD + "h-[72px] pt-px text-center text-[40.5px] leading-[72px] tracking-[-0.018em]"}>Jacksonville, FL</h1>

          <div className="mt-6 grid grid-cols-2 gap-6">
            <section className={CARD + "flex h-[497px] flex-col pl-[64px]"}>
              <div className="mt-[33px] flex items-baseline leading-[60px]">
                <h2 className="text-[48.5px] font-medium tracking-[-0.046em]">Current Weather</h2>
                <span className="ml-4 text-[28.5px] tracking-[0.012em] text-gray-400">As of 5:50 PM ET</span>
              </div>
              <div className="mt-[71px] flex h-[120px]">
                <BsCloudsFill className="size-[120px]" />
                <span className="ml-[24px] font-['Open_Sans',sans-serif] text-[122px] font-light leading-[116px]">83</span>
                <span className="-ml-[2px] font-['Open_Sans',sans-serif] text-[60px] font-light leading-[77px]">°F</span>
                <div className="ml-[26px] leading-[48px]">
                  <div className="tracking-[-0.03em] text-[#8fdcff]">Overcast</div>
                  <div className="font-medium tracking-[-0.028em]">Feels like 89°</div>
                </div>
              </div>
              <p className="mt-[53px] leading-[48px] tracking-[-0.0415em]">Partly cloudy throughout the day with storms possible.</p>
              <p className="mt-6 font-medium leading-[48px] tracking-[-0.028em]">
                Day 83° • <span className="text-gray-200">Night 76°</span>
              </p>
            </section>

            <div className="grid grid-cols-2 gap-3">
              <section className={CARD + "h-[496px] pl-8"}>
                <h3 className="mt-6 font-medium leading-[48px]">Observations</h3>
                <div className="mt-6 grid grid-cols-[240px_auto] gap-y-6">
                  <Stat label="Air Quality"><i className="ml-2 mr-2 size-6 rounded-full bg-[#fbec5d]" />56</Stat>
                  <Stat label="Humidity">73%</Stat>
                  <Stat label="Wind">2 mph&nbsp;<span className="font-normal text-gray-300">E</span></Stat>
                  <Stat label="Pressure"><span className="tracking-[-0.08em]">1016</span>&nbsp;<span className="tracking-[-0.055em]">hPa</span></Stat>
                  <Stat label="Cloud Cover"><span className="tracking-[-0.045em]">100%</span></Stat>
                  <div>
                    <Stat label="UV Index">3 - Moderate</Stat>
                    <div className="relative mt-[13px] h-[6px] w-[160px] rounded-full bg-[linear-gradient(90deg,#3a7d1e,#f5ee4e_27%,#f2a33c_50%,#e8321f_75%,#d97fe0)]">
                      <span className="absolute left-[37px] top-[-5px] size-4 rounded-full border-[3px] border-gray-200 bg-[#f7e94e]" />
                    </div>
                  </div>
                </div>
              </section>
              <section className={CARD + "h-[496px] pl-8"}>
                <div className="mt-4 flex h-20 items-start">
                  <h3 className="mt-4 w-[178px] font-medium leading-[48px]">Statistics</h3>
                  <div className="h-20 w-[230px] rounded-2xl bg-gray-200/25 pt-2 text-center text-[24.5px] leading-8 tracking-[-0.028em] shadow-sm">
                    Today is <span className="font-medium">cooler</span><br />than average
                  </div>
                </div>
                <div className="grid grid-cols-[240px_auto] gap-y-6">
                  <Stat label="Avg High">90°</Stat>
                  <Stat label="Avg Low">77°</Stat>
                  <Stat label="Record High">95°</Stat>
                  <Stat label="Record Low">72°</Stat>
                  <div className="mt-2"><Stat label="Avg Temp">83°</Stat></div>
                  <div className="mt-2"><Stat label="Avg Precip">0.2 in</Stat></div>
                </div>
              </section>
            </div>
          </div>

          <div className="mt-[23px] grid grid-cols-2 gap-6">
            <section className={CARD + "h-[811px] pl-12 pr-[48px]"}>
              <div className="mt-[41px] flex h-[63px] items-center justify-between pl-2">
                <h2 className="text-[49px]">Today</h2>
                <span className="tracking-[-0.012em] text-gray-300">Friday, 8/29</span>
              </div>
              <ul>
                <Row icon={<BsThermometerHalf className="size-10" />} label="Temperature" value={<span className="tracking-[-0.012em]">83° / 76°</span>} />
                <Row icon={<BsThermometerHigh className="size-10" />} label="Feels Like" value={<span className="tracking-[-0.012em]">89° / 76°</span>} />
                <Row
                  icon={<svg className="ml-[2px] h-8 w-[22px] fill-[#4aa3e4]" viewBox="0 0 22 32"><path d="M11 0C12 5 22 13.500 22 21.500A11 10.500 0 0 1 0 21.500C0 13.500 10 5 11 0Z" /></svg>}
                  label={<span className="tracking-[-0.028em]">Precipitation Probability</span>} value="100%" />
                <Row icon={<WiHumidity className="-mr-[5px] ml-0 mt-[6px] size-[48px] shrink-0 text-[#5cb4f2]" />} label="Humidity" value={<span className="tracking-[-0.055em]">81%</span>} />
                <Row icon={<WindIcon />} label="Wind"
                  value={<span className="tracking-[-0.03em]"><span className="tracking-[-0.14em]">11</span>&nbsp; mph <span className="font-normal text-gray-300">E</span></span>} />
                <Row icon={<BsSunrise className="size-10 text-[#fbe94f]" />} label="Sunrise" value={<span className="tracking-[-0.06em]">7:01 AM</span>} />
                <Row icon={<BsSunset className="size-10 text-[#f2b05c]" />} label="Sunset" value="7:52 PM" />
                <Row last blue
                  icon={<svg className="ml-4 h-[34px] w-[17px] fill-white" viewBox="0 0 17 34"><path d="M0 0C11 0 17 8 17 17S11 34 0 34C3.500 29 4 22 4 17S3.500 5 0 0Z" /></svg>}
                  label="Moon Phase" value={<span className="tracking-[-0.042em]">First Quarter</span>} />
              </ul>
            </section>
            <MapCard />
          </div>

          <div className="mt-8 grid h-[96px] grid-cols-3 pl-[23px]">
            <h2 className="-mt-[6px] text-[49px] leading-[76px] tracking-[-0.036em]">Hourly</h2>
            <span className="-ml-[23px] mt-[24px] text-center font-medium leading-[48px] tracking-[-0.024em]">Friday, 8/29</span>
          </div>
          <div className="flex gap-6">
            {HOURS.map((t, i) => (
              <section key={i} className={CARD + "flex h-[260px] w-[264px] shrink-0 flex-col items-center"}>
                <div className="mt-5 flex h-[72px] items-center text-[49px] font-medium leading-[72px]">
                  {i === 0 ? <CloudSun /> : <CloudMoon />}
                  <span className="-ml-px">{t}°</span>
                </div>
                <div className="mt-[22px] font-medium leading-[48px] tracking-[-0.038em]">Partially cloudy</div>
              </section>
            ))}
          </div>
        </main>
      </div>
      <div className="h-full w-[30px] border-l-2 border-[#e8e8e8] bg-[#fafafa] pl-[6px] pt-[6px]">
        <div className="h-[847px] w-4 rounded-full bg-[#c1c1c1]" />
      </div>
    </div>
  );
}
